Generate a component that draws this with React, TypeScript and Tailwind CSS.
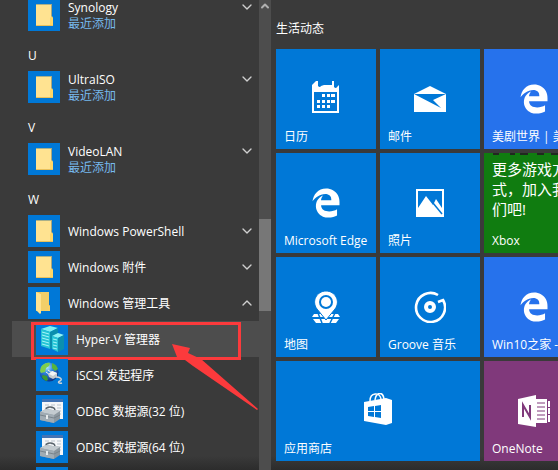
import { ChevronDown, ChevronUp } from 'lucide-react';
import { FaEdgeLegacy } from 'react-icons/fa';
import type { ReactNode } from 'react';

function FolderIcon() {
  return (
    <svg width="32" height="32" viewBox="0 0 32 32">
      <path d="M8 5h16v13l1 2v7H8z" fill="#ffe391" />
      <path d="M8 5h16v1H8z" fill="#a9b08a" />
      <path d="M23 5h1v13l-1 2z" fill="#a8a67c" />
      <path d="M22 19l2-2 1 2v7h-3z" fill="#ffd766" />
      <path d="M8 26h17v1H8z" fill="#e9c15c" />
    </svg>
  );
}

function OpenFolderIcon() {
  return (
    <svg width="32" height="32" viewBox="0 0 32 32">
      <path d="M8 5h13v13l1 1v5H8z" fill="#ecc65c" />
      <path d="M13 5h8v13l-1 1v5h-7z" fill="#f3cf68" />
      <path d="M20 19l1-1 1 1v5h-2z" fill="#fbd063" />
      <path d="M8 5l5 2v19l-1 1-4-4z" fill="#ffe391" />
    </svg>
  );
}

function ServersIcon() {
  return (
    <svg width="32" height="32" viewBox="0 0 32 32">
      <path d="M5 6l9-3 8 2-8 4z" fill="#7df0f4" />
      <path d="M5 6l9 3v17l-9-3z" fill="#25c4d6" />
      <path d="M14 9l8-4v18l-8 3z" fill="#0b8fae" />
      <path d="M6 9l7 2M6 12l7 2M6 15l7 2M6 18l7 2M6 21l7 2" stroke="#a5f6f8" strokeWidth="1" />
      <path d="M16 13l6-3 6 2-6 3z" fill="#8df4f6" />
      <path d="M16 13l6 2v14l-6-3z" fill="#25c4d6" />
      <path d="M22 15l6-3v14l-6 3z" fill="#0b8fae" />
      <path d="M17 16l4 1M17 19l4 1M17 22l4 1M17 25l4 1" stroke="#a5f6f8" strokeWidth="1" />
    </svg>
  );
}

function GlobeIcon() {
  return (
    <svg width="32" height="32" viewBox="0 0 32 32">
      <defs>
        <radialGradient id="globe" cx="0.4" cy="0.25" r="0.8">
          <stop offset="0" stopColor="#b9ecff" />
          <stop offset="0.4" stopColor="#2e83dc" />
          <stop offset="1" stopColor="#0a2a78" />
        </radialGradient>
      </defs>
      <circle cx="13" cy="13" r="9.5" fill="url(#globe)" />
      <path d="M5 8c2-3 6-5 9-4l-1 3-3 2-1 4-4 1-1-2z" fill="#7fce4c" />
      <path d="M16 4c3 1 5 3 6 6l-3 2-3-3z" fill="#58b43c" />
      <path d="M7 16l4 1 1 4-2 1c-2-1-4-3-4-5z" fill="#3d9a34" />
      <path d="M10 13l4 3M12 11l4 3" stroke="#f2f2f2" strokeWidth="1" />
      <path d="M12 15l4-3 5 2v4l-4 2-4-2z" fill="#c4c9cc" />
      <path d="M16 12l5 2-4 3-4-2z" fill="#f2f4f5" />
      <path d="M20 18c4 0 7 2 4 4-3 1-1 3 2 2" stroke="#cfd4d8" strokeWidth="1.5" fill="none" />
    </svg>
  );
}

function ToolboxIcon() {
  return (
    <svg width="32" height="32" viewBox="0 0 32 32">
      <path d="M6 4h21v20H6z" fill="#f5f7f9" />
      <path d="M6 4h21v3H6z" fill="#4373b4" />
      <path d="M9 10h4M15 10h4M21 10h4M9 13h4M15 13h4M21 13h4M21 16h4M21 19h4" stroke="#b9c3cd" strokeWidth="1" />
      <path d="M10 15c0-4 8-4 9 0" stroke="#59636b" strokeWidth="1.5" fill="none" />
      <path d="M4 17l6-3 14 2v8l-6 4-14-3z" fill="#8c979f" />
      <path d="M4 17l6-3 14 2-6 4z" fill="#c3cbd0" />
      <path d="M4 17l14 3v8L4 25z" fill="#a1acb4" />
      <path d="M4 20l14 3 6-3" stroke="#78838b" strokeWidth="1" fill="none" />
      <path d="M10 20h2v4h-2z" fill="#e6eaec" />
    </svg>
  );
}

function CalendarIcon() {
  return (
    <svg width="28" height="36" viewBox="0 0 28 36" fill="#fff">
      <path d="M0 4l4-4h2v5q2 2 3 0l3-1h8V0h2v6q2 2 3 0l2-2v28H0zM2 11v19h23V11z" fillRule="evenodd" />
      <path d="M10 13h3v3h-3zM15 13h3v3h-3zM19 13h4v3h-4zM5 19h3v3H5zM10 19h3v3h-3zM15 19h3v3h-3zM19 19h4v3h-4zM5 24h3v3H5zM10 24h3v3h-3zM15 24h3v3h-3z" />
    </svg>
  );
}

function MailIcon() {
  return (
    <svg width="32" height="26" viewBox="0 0 32 26" fill="#fff">
      <path d="M0 8L16 0l16 8z" />
      <path d="M0 8l27 14-8-8 13-6v18H0z" />
    </svg>
  );
}

function EdgeIcon() {
  return <FaEdgeLegacy size={30} />;
}

function PhotosIcon() {
  return (
    <svg width="28" height="28" viewBox="0 0 28 28" fill="#fff">
      <path d="M0 0h28v28H0zM2 2v17l8-12 7 9 3-6 6 9V2z" fillRule="evenodd" />
      <path d="M17 14l9 11" stroke="#0078d7" strokeWidth="1.5" />
    </svg>
  );
}

function MapsIcon() {
  return (
    <svg width="28" height="32" viewBox="0 0 28 32">
      <path d="M2 23h24l2 3H0zM1 28h26l-3 4H4z" fill="#fff" />
      <path d="M6 22l4 10M23 22l-5 10M0 27h28" stroke="#0078d7" strokeWidth="1.5" />
      <path d="M14 29L5 18C-1 10 5 0 14 0s15 10 9 18z" fill="#fff" stroke="#0078d7" strokeWidth="1" />
      <circle cx="14" cy="11" r="7" fill="#0078d7" />
      <circle cx="14" cy="11" r="5" fill="#fff" />
    </svg>
  );
}

function GrooveIcon() {
  return (
    <svg width="32" height="32" viewBox="0 0 32 32" fill="none" stroke="#fff">
      <path d="M24 4A14.5 14.5 0 1 0 29 9l-5 2" strokeWidth="2.6" />
      <circle cx="16" cy="16" r="4" strokeWidth="4" />
    </svg>
  );
}

function StoreIcon() {
  return (
    <svg width="28" height="36" viewBox="0 0 28 36">
      <path d="M6 8c0-9 10-9 11-2M11 7c1-8 8-9 9-1" stroke="#fff" strokeWidth="1.5" fill="none" />
      <path d="M0 9l22-4 6 2v23l-6 2-22-4z" fill="#fff" />
      <path d="M4 14l6-1v5H4zM11 13l6-1v6h-6zM4 19h6v5l-6-1zM11 19h6v6l-6-1z" fill="#0078d7" />
    </svg>
  );
}

function OneNoteIcon() {
  return (
    <svg width="32" height="32" viewBox="0 0 32 32">
      <path d="M18 4h11v24H18zM30 6h2v6h-2zM30 13h2v6h-2zM30 20h2v7h-2z" fill="#fff" />
      <path d="M19 8h8M19 12h8M19 16h8M19 20h8M19 24h8" stroke="#80397b" strokeWidth="1" />
      <path d="M0 4l18-4v32L0 29z" fill="#fff" />
      <path d="M5 22V10l7 12V10" stroke="#80397b" strokeWidth="2" fill="none" />
    </svg>
  );
}

type App = { name: string; icon: ReactNode; recent?: boolean; open?: boolean; active?: boolean };

function Letter({ children }: { children: string }) {
  return (
    <button className="flex h-9 w-full items-center pt-2.5 pl-7 text-left text-white">{children}</button>
  );
}

function FolderRow({ name, icon, recent, open }: App) {
  const Chevron = open ? ChevronUp : ChevronDown;
  return (
    <button className="flex h-9 w-full items-center gap-2 pr-1 pl-7 text-left" aria-expanded={!!open}>
      <span className="size-8 shrink-0 bg-[#0078d7]">{icon}</span>
      <span className="flex-1 pt-0.5 text-white">
        {name}
        {recent && <span className="block text-[#76b9ed]">最近添加</span>}
      </span>
      <Chevron size={16} strokeWidth={2} className={recent ? 'mb-4 text-[#d0d0d0]' : 'text-[#d0d0d0]'} />
    </button>
  );
}

function AppRow({ name, icon, active }: App) {
  return (
    <a
      href="#"
      className={`relative ml-3 flex h-9 items-center gap-2 pl-6 text-white ${active ? 'bg-[#4d4d4d]' : ''}`}
    >
      <span className="size-8 shrink-0 bg-[#0078d7]">{icon}</span>
      <span className="pt-0.5">{name}</span>
      {active && <Callout />}
    </a>
  );
}

function Callout() {
  return (
    <>
      <span className="absolute top-px right-[18px] -bottom-[3px] left-[19px] border-3 border-[#fb3a3c]" />
      <svg className="absolute top-5 left-40 z-10" width="88" height="70" viewBox="172 341 88 70">
        <path d="M172 344l18 4-2 5 13 6 57 50-1 1-64-44-12-9h-4z" fill="#fb3a3c" />
      </svg>
    </>
  );
}

type TileProps = { name: string; icon: ReactNode; color?: string; wide?: boolean };

function Tile({ name, icon, color = 'bg-[#0078d7]', wide }: TileProps) {
  return (
    <a
      href="#"
      className={`relative flex h-[100px] items-center justify-center text-white ${color} ${wide ? 'col-span-2' : ''}`}
    >
      {icon}
      <span className="absolute bottom-1 left-2 whitespace-nowrap">{name}</span>
    </a>
  );
}

export default function App() {
  return (
    <main className="flex h-screen overflow-hidden bg-linear-to-b from-[#3a3a3a] from-97% to-[#2c2c2c] font-['Open_Sans','Noto_Sans_CJK_SC',sans-serif] text-xs leading-4">
      <nav className="-mt-[3px] w-[259px] shrink-0">
        <FolderRow name="Synology" icon={<FolderIcon />} recent />
        <Letter>U</Letter>
        <FolderRow name="UltraISO" icon={<FolderIcon />} recent />
        <Letter>V</Letter>
        <FolderRow name="VideoLAN" icon={<FolderIcon />} recent />
        <Letter>W</Letter>
        <FolderRow name="Windows PowerShell" icon={<FolderIcon />} />
        <FolderRow name="Windows 附件" icon={<FolderIcon />} />
        <FolderRow name="Windows 管理工具" icon={<OpenFolderIcon />} open />
        <AppRow name="Hyper-V 管理器" icon={<ServersIcon />} active />
        <AppRow name="iSCSI 发起程序" icon={<GlobeIcon />} />
        <AppRow name="ODBC 数据源(32 位)" icon={<ToolboxIcon />} />
        <AppRow name="ODBC 数据源(64 位)" icon={<ToolboxIcon />} />
        <AppRow name="" icon={null} />
      </nav>

      {/* Scrollbar */}
      <div className="flex w-3 shrink-0 flex-col items-center bg-[#4d4d4d]">
        <ChevronUp size={12} strokeWidth={4} className="text-[#b0b0b0]" />
        <div className="mt-[207px] h-[92px] w-full bg-[#777777]" />
      </div>

      <section className="min-w-0 flex-1 overflow-hidden pl-[5px]">
        <h2 className="mt-[21px] mb-3 text-white">生活动态</h2>
        <div className="grid w-[308px] grid-cols-3 gap-1">
          <Tile name="日历" icon={<CalendarIcon />} />
          <Tile name="邮件" icon={<MailIcon />} />
          <Tile name="美剧世界 | 美剧" icon={<EdgeIcon />} color="bg-[#2672ec]" />
          <Tile name="Microsoft Edge" icon={<EdgeIcon />} />
          <Tile name="照片" icon={<PhotosIcon />} />
          <a href="#" className="flex h-[100px] flex-col bg-[#107c10] text-white">
            {/* bottom edge of the live tile's artwork */}
            <svg width="100" height="2" viewBox="0 0 100 2">
              <path d="M9 0h6v2H9zM26 0h5v2h-5zM36 0h8v2h-8zM53 0h7v2h-7zM67 0h7v2h-7z" fill="#20281f" />
            </svg>
            <span className="px-2 pt-1 text-[15px] leading-5">更多游戏方式，加入我们吧!</span>
            <span className="mt-auto px-2 pb-1">Xbox</span>
          </a>
          <Tile name="地图" icon={<MapsIcon />} />
          <Tile name="Groove 音乐" icon={<GrooveIcon />} />
          <Tile name="Win10之家 - 家" icon={<EdgeIcon />} color="bg-[#2672ec]" />
          <Tile name="应用商店" icon={<StoreIcon />} wide />
          <Tile name="OneNote" icon={<OneNoteIcon />} color="bg-[#80397b]" />
        </div>
      </section>
    </main>
  );
}
